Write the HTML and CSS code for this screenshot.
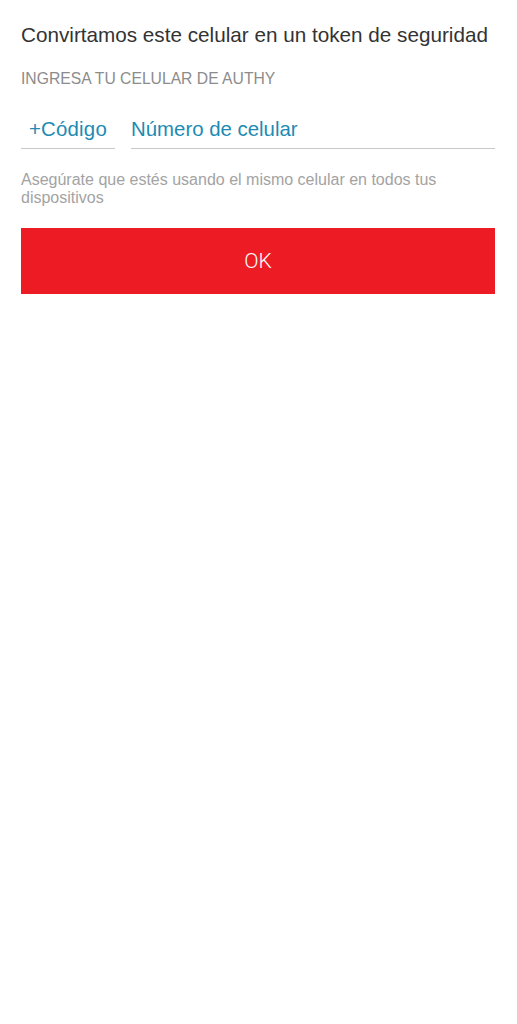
FILE: index.html
```html
<!DOCTYPE html>
<html lang="es">
<head>
<meta charset="utf-8">
<title>Authy</title>
<link rel="stylesheet" href="styles.css">
</head>
<body>
<main class="screen">
  <h1 class="title">Convirtamos este celular en un token de seguridad</h1>
  <div class="label">INGRESA TU CELULAR DE AUTHY</div>
  <div class="fields">
    <div class="field code">+Código</div>
    <div class="field number">Número de celular</div>
  </div>
  <p class="help">Asegúrate que estés usando el mismo celular en todos tus dispositivos</p>
  <button class="ok" type="button">OK</button>
</main>
</body>
</html>
```
FILE: styles.css
```css
html, body {
  margin: 0;
  padding: 0;
  background: #ffffff;
}
body {
  font-family: "Liberation Sans", Arial, sans-serif;
  width: 517px;
  height: 1024px;
}
.screen {
  padding: 22px 22px 0 21px;
  display: flex;
  flex-direction: column;
}
.title {
  margin: 0;
  font-size: 20.7px;
  font-weight: normal;
  color: #333333;
  line-height: 26px;
  white-space: nowrap;
}
.label {
  margin-top: 22px;
  font-size: 15.7px;
  color: #8c8c8c;
  line-height: 18px;
}
.fields {
  margin-top: 29px;
  display: flex;
  gap: 16px;
}
.field {
  font-size: 20.4px;
  color: #1d8bb3;
  line-height: 24px;
  padding-bottom: 7px;
  border-bottom: 1px solid #c8c8c8;
}
.code {
  width: 86px;
  padding-left: 8px;
  letter-spacing: 0.2px;
}
.number {
  flex: 1;
}
.help {
  margin: 22px 0 0 0;
  font-size: 16px;
  line-height: 18px;
  color: #a3a3a3;
  padding-right: 40px;
}
.ok {
  margin-top: 21px;
  height: 66px;
  border: none;
  background: #ed1c24;
  color: #ffffff;
  font-family: Roboto, "Liberation Sans", Arial, sans-serif;
  font-size: 21px;
  font-weight: 300;
  padding: 0;
}
```
